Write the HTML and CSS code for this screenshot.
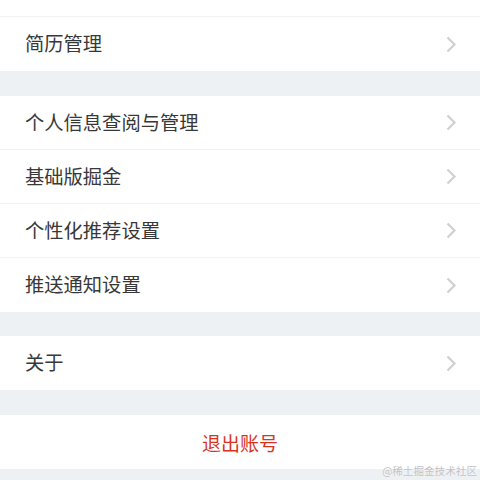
FILE: index.html
```html
<!DOCTYPE html>
<html lang="zh-CN">
<head>
<meta charset="utf-8">
<link rel="stylesheet" href="styles.css">
</head>
<body>
<div class="page">
  <div class="group">
    <div class="top"></div>
    <div class="row">
      <span class="label">简历管理</span>
      <svg class="chev" viewBox="0 0 11 17" width="11" height="17"><path d="M1.5 1.5 L8.5 8.5 L1.5 15.5" fill="none" stroke="#d0d0d0" stroke-width="2.2"/></svg>
    </div>
  </div>
  <div class="gap g25"></div>
  <div class="group">
    <div class="row line">
      <span class="label">个人信息查阅与管理</span>
      <svg class="chev" viewBox="0 0 11 17" width="11" height="17"><path d="M1.5 1.5 L8.5 8.5 L1.5 15.5" fill="none" stroke="#d0d0d0" stroke-width="2.2"/></svg>
    </div>
    <div class="row line">
      <span class="label">基础版掘金</span>
      <svg class="chev" viewBox="0 0 11 17" width="11" height="17"><path d="M1.5 1.5 L8.5 8.5 L1.5 15.5" fill="none" stroke="#d0d0d0" stroke-width="2.2"/></svg>
    </div>
    <div class="row line">
      <span class="label">个性化推荐设置</span>
      <svg class="chev" viewBox="0 0 11 17" width="11" height="17"><path d="M1.5 1.5 L8.5 8.5 L1.5 15.5" fill="none" stroke="#d0d0d0" stroke-width="2.2"/></svg>
    </div>
    <div class="row">
      <span class="label">推送通知设置</span>
      <svg class="chev" viewBox="0 0 11 17" width="11" height="17"><path d="M1.5 1.5 L8.5 8.5 L1.5 15.5" fill="none" stroke="#d0d0d0" stroke-width="2.2"/></svg>
    </div>
  </div>
  <div class="gap g24"></div>
  <div class="group">
    <div class="row">
      <span class="label">关于</span>
      <svg class="chev" viewBox="0 0 11 17" width="11" height="17"><path d="M1.5 1.5 L8.5 8.5 L1.5 15.5" fill="none" stroke="#d0d0d0" stroke-width="2.2"/></svg>
    </div>
  </div>
  <div class="gap g25"></div>
  <div class="group">
    <div class="row logout">退出账号</div>
  </div>
  <div class="footer">
    <span class="mark">@稀土掘金技术社区</span>
  </div>
</div>
</body>
</html>
```
FILE: styles.css
```css
html, body {
  margin: 0;
  padding: 0;
  background: #eef1f4;
}
.page {
  width: 480px;
  height: 480px;
  overflow: hidden;
  display: flex;
  flex-direction: column;
  font-family: "Noto Sans CJK SC", "Noto Sans", sans-serif;
}
.group {
  background: #ffffff;
  display: flex;
  flex-direction: column;
}
.top {
  height: 16px;
  border-bottom: 1px solid #f1f2f4;
}
.row {
  box-sizing: border-box;
  height: 54px;
  padding: 0 23px 0 25px;
  display: flex;
  align-items: center;
  justify-content: space-between;
}
.row.line {
  border-bottom: 1px solid #f1f2f4;
}
.label {
  font-size: 19.3px;
  color: #383838;
  line-height: 1;
}
.chev {
  display: block;
  flex: none;
}
.logout {
  justify-content: center;
  padding: 0;
  font-size: 19px;
  color: #d7341f;
  line-height: 1;
}
.gap.g25 { height: 25px; }
.gap.g24 { height: 24px; }
.footer {
  flex: 1;
  display: flex;
  justify-content: flex-end;
  align-items: flex-start;
  padding-right: 3px;
}
.mark {
  font-size: 10.6px;
  line-height: 1;
  margin-top: -3px;
  color: #bfc2c6;
  font-family: "Noto Sans CJK SC", sans-serif;
  text-shadow: 0 0 1px #ffffff;
}
```
